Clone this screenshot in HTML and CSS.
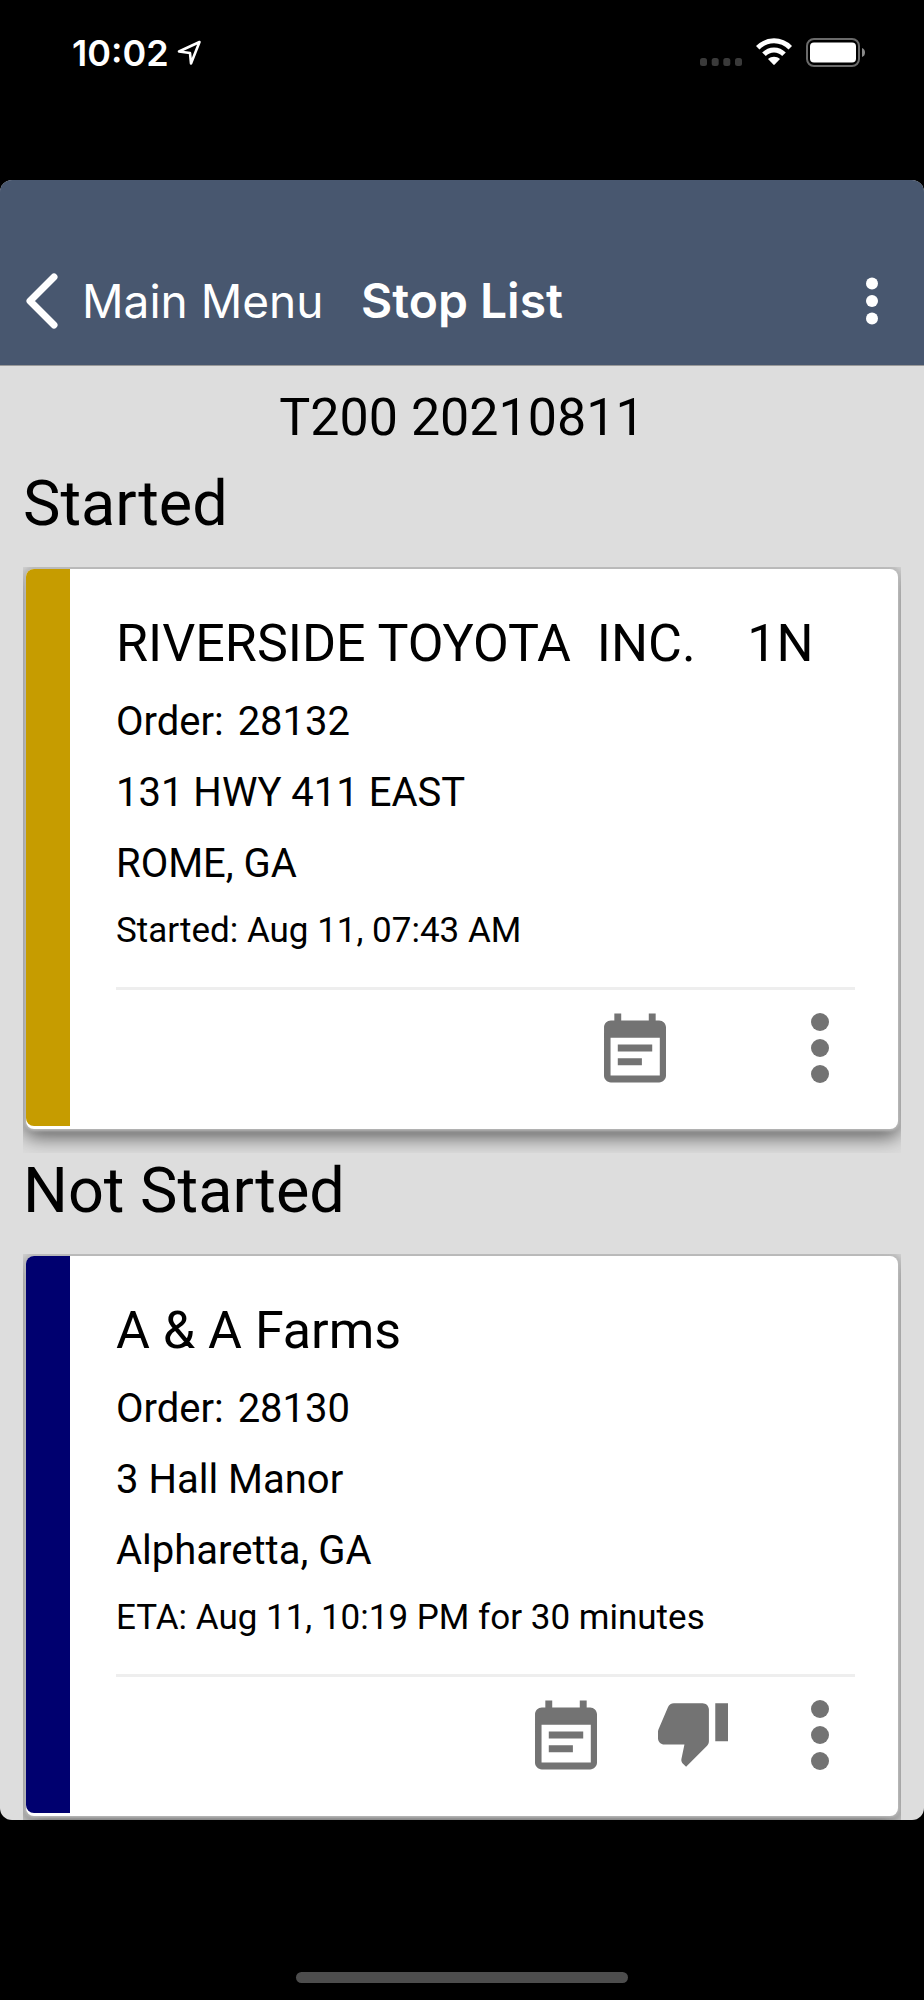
FILE: index.html
```html
<!DOCTYPE html>
<html lang="en">
<head>
    <meta charset="UTF-8">
    <meta name="viewport" content="width=device-width, initial-scale=1.0">
    <title>Stop List</title>
    <link rel="stylesheet" href="styles.css">
</head>
<body>
    <div class="status-bar">
        <span class="time">10:02</span>
        <svg class="location" width="26" height="27" viewBox="0 0 26 27" fill="none" stroke="#fff" stroke-width="2.600" stroke-linejoin="round">
            <path d="M22.500 3 L2 12.500 L13 14 L14 24.500 Z"/>
        </svg>
        <div class="status-icons">
            <svg width="42" height="28" viewBox="0 0 42 28" fill="#3a3a3a">
                <rect x="0" y="20" width="7" height="8" rx="2.500"/>
                <rect x="11.700" y="20" width="7" height="8" rx="2.500"/>
                <rect x="23.300" y="20" width="7" height="8" rx="2.500"/>
                <rect x="35" y="20" width="7" height="8" rx="2.500"/>
            </svg>
            <svg width="36" height="28" viewBox="0 0 36 28" fill="none" stroke="#fff" stroke-width="5">
                <path d="M1.700 9.800 C11 0.500 25 0.500 34.300 9.800"/>
                <path d="M8 16.300 C13.500 10.500 22.500 10.500 28 16.300"/>
                <path fill="#fff" stroke="none" d="M12 21 C15.500 18 20.500 18 24 21 L18.700 26.600 Q18 27.200 17.300 26.600 Z"/>
            </svg>
            <svg width="60" height="30" viewBox="0 0 60 30">
                <rect x="1" y="1" width="52" height="27" rx="7" fill="none" stroke="#6a6a6a" stroke-width="2"/>
                <rect x="4" y="4.500" width="46" height="20" rx="4" fill="#fff"/>
                <path d="M56 10 Q59 11 59 14.500 Q59 18 56 19 Z" fill="#8a8a8a"/>
            </svg>
        </div>
    </div>

    <div class="app">
        <nav class="nav-bar">
            <a class="back" href="#">
                <svg width="32" height="56" viewBox="0 0 32 56" fill="none" stroke="#fff" stroke-width="7" stroke-linecap="round" stroke-linejoin="round">
                    <path d="M28 4 L4 28 L28 52"/>
                </svg>
                <span>Main Menu</span>
            </a>
            <h1 class="nav-title">Stop List</h1>
            <button class="nav-menu" aria-label="More options">
                <svg width="12" height="48" viewBox="0 0 12 48" fill="#fff">
                    <circle cx="6" cy="6.500" r="6"/>
                    <circle cx="6" cy="24" r="6"/>
                    <circle cx="6" cy="41.500" r="6"/>
                </svg>
            </button>
        </nav>

        <main class="stops">
            <p class="route">T200 20210811</p>

            <h2>Started</h2>
            <div class="card-wrap">
                <article class="card">
                    <div class="stripe started"></div>
                    <div class="card-body">
                        <h3>RIVERSIDE TOYOTA  INC.    1N</h3>
                        <p>Order: <span class="order">28132</span></p>
                        <p>131 HWY 411 EAST</p>
                        <p>ROME, GA</p>
                        <p class="when">Started: Aug 11, 07:43 AM</p>
                        <div class="actions two">
                            <button aria-label="Stop notes">
                                <svg width="62" height="70" viewBox="3 1 18 20">
                                    <path d="M17 10H7v2h10v-2zm2-7h-1V1h-2v2H8V1H6v2H5c-1.110 0-1.990.9-1.990 2L3 19c0 1.100.89 2 2 2h14c1.100 0 2-.9 2-2V5c0-1.100-.9-2-2-2zm.2 16H4.900V8h14.300v11zM14 14H7v2h7v-2z"/>
                                </svg>
                            </button>
                            <button aria-label="More actions">
                                <svg width="18" height="70" viewBox="0 0 18 70">
                                    <circle cx="9" cy="9" r="9"/>
                                    <circle cx="9" cy="35" r="9"/>
                                    <circle cx="9" cy="61" r="9"/>
                                </svg>
                            </button>
                        </div>
                    </div>
                </article>
            </div>

            <h2>Not Started</h2>
            <div class="card-wrap">
                <article class="card">
                    <div class="stripe not-started"></div>
                    <div class="card-body">
                        <h3>A &amp; A Farms</h3>
                        <p>Order: <span class="order">28130</span></p>
                        <p>3 Hall Manor</p>
                        <p>Alpharetta, GA</p>
                        <p class="when">ETA: Aug 11, 10:19 PM for 30 minutes</p>
                        <div class="actions">
                            <button aria-label="Stop notes">
                                <svg width="62" height="70" viewBox="3 1 18 20">
                                    <path d="M17 10H7v2h10v-2zm2-7h-1V1h-2v2H8V1H6v2H5c-1.110 0-1.990.9-1.990 2L3 19c0 1.100.89 2 2 2h14c1.100 0 2-.9 2-2V5c0-1.100-.9-2-2-2zm.2 16H4.900V8h14.300v11zM14 14H7v2h7v-2z"/>
                                </svg>
                            </button>
                            <button aria-label="Reject stop">
                                <svg width="70" height="70" viewBox="1 2 22 22">
                                    <path d="M15 3H6c-.83 0-1.540.5-1.840 1.220l-3.020 7.050c-.09.23-.14.47-.14.730v2c0 1.100.9 2 2 2h6.310l-.95 4.570-.03.320c0 .41.17.79.44 1.060L9.830 23l6.590-6.590c.36-.36.58-.86.58-1.410V5c0-1.100-.9-2-2-2zm4 0v12h4V3h-4z"/>
                                </svg>
                            </button>
                            <button aria-label="More actions">
                                <svg width="18" height="70" viewBox="0 0 18 70">
                                    <circle cx="9" cy="9" r="9"/>
                                    <circle cx="9" cy="35" r="9"/>
                                    <circle cx="9" cy="61" r="9"/>
                                </svg>
                            </button>
                        </div>
                    </div>
                </article>
            </div>
        </main>
    </div>

    <div class="home-area">
        <div class="home-indicator"></div>
    </div>
</body>
</html>
```
FILE: styles.css
```css
* {
    box-sizing: border-box;
}
body {
    margin: 0;
    height: 100vh;
    display: flex;
    flex-direction: column;
    background: #000;
    color: #000;
    font-family: Roboto, sans-serif;
}
h1, h2, h3, p {
    margin: 0;
    font-weight: 400;
}
button {
    padding: 0;
    border: 0;
    background: none;
    cursor: pointer;
}
svg {
    display: block;
    flex: none;
}

/* phone status bar */
.status-bar {
    flex: none;
    height: 180px;
    padding: 32px 58px 0 72px;
    display: flex;
    align-items: flex-start;
    color: #fff;
    font-family: Inter, sans-serif;
}
.time {
    font-size: 36px;
    line-height: 42px;
    font-weight: 600;
}
.location {
    margin: 7px 0 0 8px;
}
.status-icons {
    margin: 6px 0 0 auto;
    display: flex;
    gap: 14px;
}

.app {
    flex: 1;
    min-height: 0;
    overflow: hidden;
    border-radius: 12px;
    background: #ddd;
}

.nav-bar {
    height: 186px;
    padding: 56px 26px 0;
    display: grid;
    grid-template-columns: 1fr auto 1fr;
    align-items: center;
    background: #48576f;
    border-bottom: 1px solid #999;
    color: #fff;
    font-family: Inter, sans-serif;
}
.back {
    display: flex;
    align-items: center;
    gap: 24px;
    color: #fff;
    font-size: 46px;
    text-decoration: none;
    white-space: nowrap;
}
.nav-title {
    font-size: 48px;
    font-weight: 600;
}
.nav-menu {
    justify-self: end;
    padding: 0 20px;
}

.stops {
    padding: 22px 23px 0;
}
.route {
    font-size: 52px;
    line-height: 60px;
    text-align: center;
}
h2 {
    font-size: 63px;
    line-height: 76px;
    margin-bottom: 25px;
}
.route + h2 {
    margin-top: 18px;
}

/* the wrapper cuts the card shadow off at its edges */
.card-wrap {
    padding: 2px 3px 24px;
    overflow: hidden;
}
.card {
    display: flex;
    background: #fff;
    border-radius: 8px;
    box-shadow: 0 0 3px 2px #bbb, 0 6px 20px 2px rgba(0, 0, 0, 0.6);
}
.stripe {
    width: 44px;
    margin-bottom: 3px;
    border-radius: 8px 0 0 8px;
}
.started {
    background: #c69c00;
}
.not-started {
    background: #00006f;
}
.card-body {
    flex: 1;
    padding: 39px 43px 46px 46px;
}
.card-body h3 {
    font-size: 52px;
    line-height: 72px;
    margin-bottom: 6px;
    white-space: pre;
}
.card-body p {
    font-size: 40px;
    line-height: 71px;
}
.order {
    margin-left: 4px;
}
.card-body .when {
    font-size: 35px;
    line-height: 64px;
    margin-bottom: 24px;
}
.actions {
    display: flex;
    justify-content: flex-end;
    gap: 57px;
    padding-top: 23px;
    border-top: 3px solid #eee;
}
.actions.two {
    gap: 115px;
}
.actions button {
    width: 70px;
    display: flex;
    justify-content: center;
    fill: #737373;
}

.home-area {
    flex: none;
    height: 180px;
    padding-bottom: 17px;
    display: flex;
    align-items: flex-end;
    justify-content: center;
}
.home-indicator {
    width: 36%;
    height: 11px;
    border-radius: 6px;
    background: #4d4d4d;
}
```
